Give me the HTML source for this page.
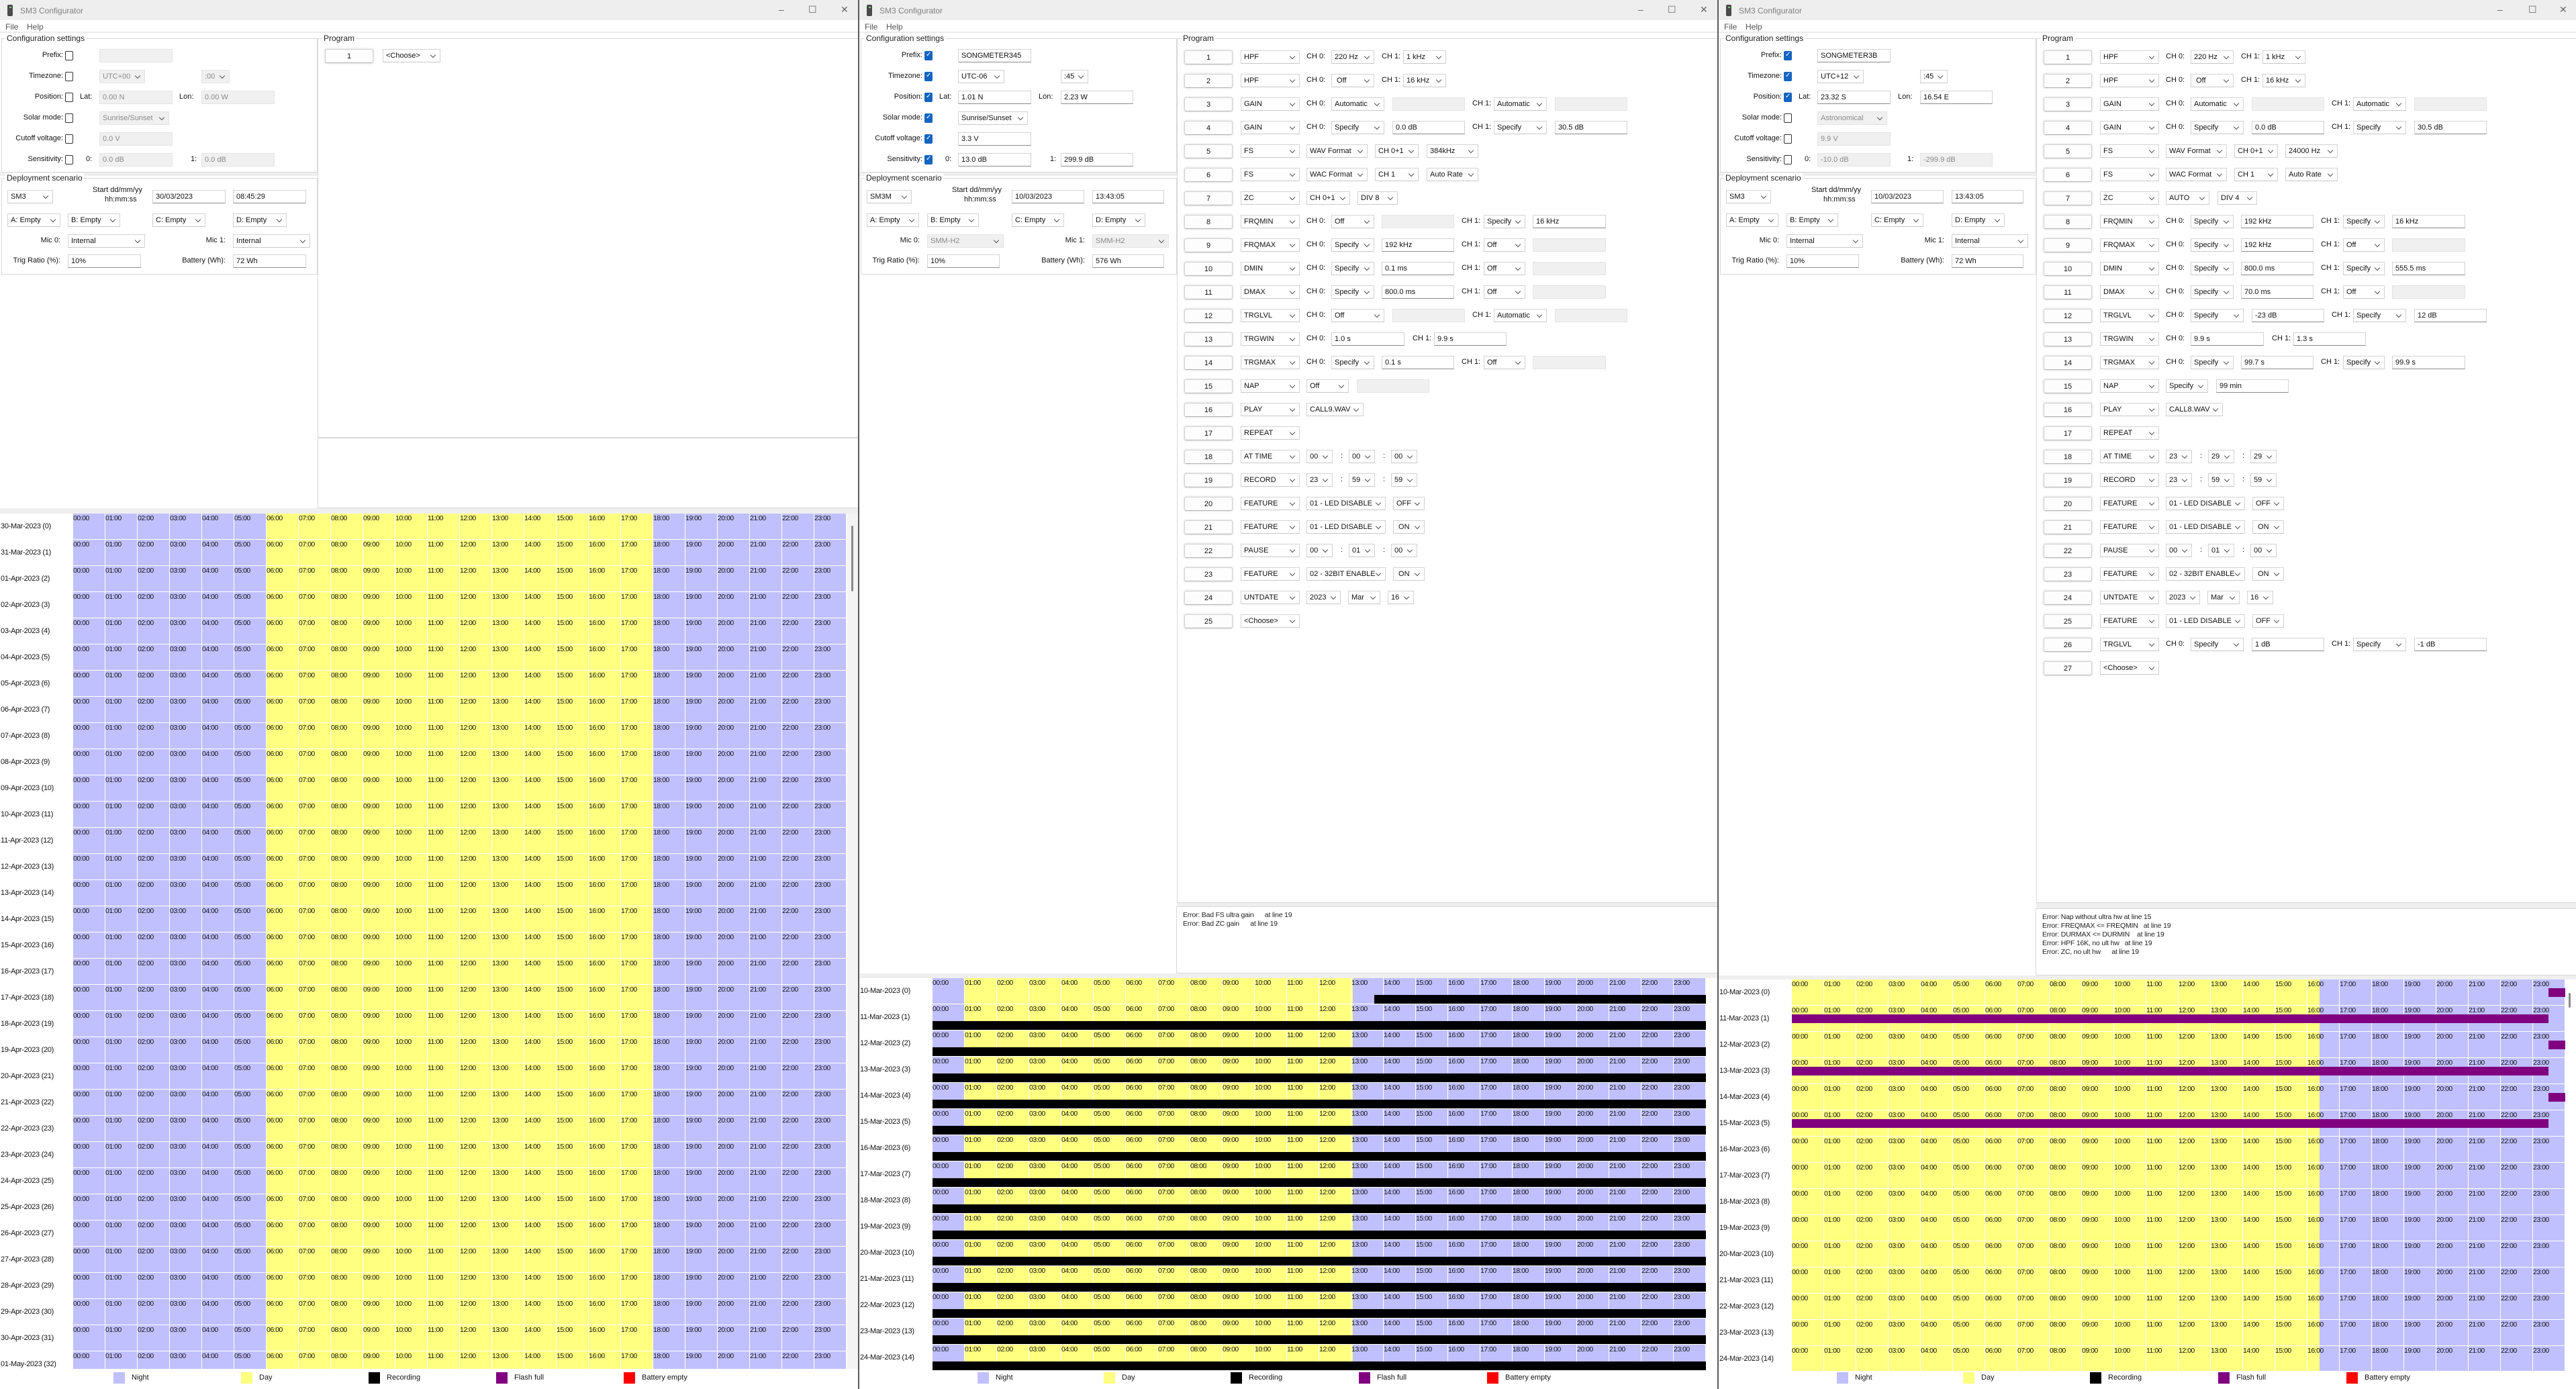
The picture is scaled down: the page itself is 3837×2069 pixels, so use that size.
<!DOCTYPE html>
<html><head><meta charset="utf-8">
<style>
*{box-sizing:border-box}
body{margin:0;width:3837px;height:2069px;position:relative;overflow:hidden;font-family:"Liberation Sans",sans-serif;font-size:11px;color:#111;background:#fff}
.w{position:absolute;top:0;width:1278px;height:2069px;overflow:hidden;background:#fff}
.dv{position:absolute;top:0;width:2px;height:2069px;background:#5a5a5a}
.tb{position:absolute;left:0;top:0;width:100%;height:30px;background:#eeeeee}
.tb .ic{position:absolute;left:11px;top:7px;width:8px;height:17px;background:#4a4a4a;border-radius:2px}
.tb .ic:after{content:"";position:absolute;left:3px;top:3px;width:3px;height:2px;background:#7c7}
.tb .tt{position:absolute;left:30px;top:9px;color:#808080;font-size:12px}
.tb .cl{position:absolute;top:6px;color:#666;font-size:14px}
.mn{position:absolute;left:0;top:30px;width:100%;height:19px;background:#fff;border-bottom:2px solid #ececec}
.mn span{position:absolute;top:3px;color:#555;font-size:12px}
.gb{position:absolute;border:1px solid #d9d9d9}
.gt{position:absolute;background:#fff;padding:0 2px;font-size:12px;color:#222}
.gs{position:absolute;background:#efefef}
.x{position:absolute;top:0;height:20px;line-height:18px;border:1px solid #d3d3d3;border-bottom:1px solid #8c8c8c;background:#fff;padding-left:4px;white-space:nowrap;overflow:hidden;font-size:11px;font-style:normal}
.s{border-bottom-color:#c8c8c8}
.s:after{content:"";position:absolute;right:7px;top:5px;width:5px;height:5px;border-right:1px solid #555;border-bottom:1px solid #555;transform:rotate(45deg)}
.d{background:#f0f0f0;color:#8a8a8a;border-color:#e4e4e4}
.nb{position:absolute;left:484px;top:0;width:72px;height:21px;line-height:20px;text-align:center;border:1px solid #cfcfcf;border-bottom-color:#b0b0b0;border-radius:3px;background:#fdfdfd;font-weight:normal;font-size:11px;box-shadow:0 0 0 2px #f2f2f2}
u{position:absolute;top:3px;text-decoration:none;white-space:nowrap}
.rl{left:0;width:94px;text-align:right}
.cb{position:absolute;left:97px;top:3px;width:12px;height:14px;border:1px solid #333;border-radius:2px;background:#fff}
.cb.on{background:#1565c0;border-color:#1565c0}
.cb.on:after{content:"✓";position:absolute;left:1px;top:-1px;color:#fff;font-size:10px}
.pr,.cr{position:absolute;left:0;width:1278px;height:22px}
.ty{left:568px;width:88px}
.a{left:666px}.c0{left:703px;width:64px}.c0w{left:703px;width:79px}
.f0{left:778px;width:108px}.f0w{left:794px;width:108px}
.la1{left:778px}.lb1{left:897px}.lc1{left:913px}
.c1{left:810px;width:64px}.c1b{left:930px;width:62px}.c1w{left:945px;width:79px}
.f1b{left:1003px;width:109px}.f1w{left:1036px;width:108px}
.t1{left:666px;width:39px}.t2{left:729px;width:39px}.t3{left:792px;width:39px}
.k1{left:717px}.k2{left:780px}
.fe{left:666px;width:118px}.fo{left:795px;width:47px}
.er{position:absolute;font-size:10.5px;letter-spacing:-0.2px;white-space:pre;color:#222}
.g{position:absolute;left:0;width:1278px;overflow:hidden;background:#fff}
.r{position:absolute;left:0;width:1278px;height:39px}
.dl{position:absolute;left:1px;top:13px;font-size:11px;letter-spacing:-0.3px;white-space:nowrap}
.h{position:absolute;left:109px;top:0;width:1152px;height:38px;white-space:nowrap;font-size:0}
.h i{display:inline-block;width:48px;height:38px;border-right:1px solid #fff;font-style:normal;font-size:10.5px;letter-spacing:-0.5px;vertical-align:top;padding-top:1px;position:relative;z-index:1}
.n1{background:linear-gradient(90deg,#c0c0ff 288px,#ffff80 288px,#ffff80 864px,#c0c0ff 864px)}
.n2{background:linear-gradient(90deg,#c0c0ff 48px,#ffff80 48px,#ffff80 626px,#c0c0ff 626px)}
.n3{background:linear-gradient(90deg,#ffff80 786px,#c0c0ff 786px)}
.bk{position:absolute;top:25px;height:13px;background:#000;z-index:2}
.fl{position:absolute;top:13px;height:13px;background:#800080;z-index:2}
.lg{position:absolute;top:2044px;width:17px;height:17px}
.lt{position:absolute;top:2046px;font-size:11px}
</style></head><body>

<!-- ================= WINDOW 1 ================= -->
<div class="w" style="left:0">
<div class="tb"><div class="ic"></div><div class="tt">SM3 Configurator</div><span class="cl" style="left:1160px">–</span><span class="cl" style="left:1204px">☐</span><span class="cl" style="left:1252px">✕</span></div>
<div class="mn"><span style="left:8px">File</span><span style="left:40px">Help</span></div>
<div class="gb" style="left:2px;top:57px;width:471px;height:200px"></div><div class="gt" style="left:8px;top:50px">Configuration settings</div>
<div class="gs" style="left:0;top:257px;width:473px;height:5px"></div>
<div class="gb" style="left:2px;top:265px;width:471px;height:144px"></div><div class="gt" style="left:8px;top:258px">Deployment scenario</div>
<div class="gb" style="left:473px;top:57px;width:810px;height:595px"></div><div class="gt" style="left:480px;top:50px">Program</div>
<div class="gb" style="left:473px;top:652px;width:810px;height:105px"></div>
<div class="gs" style="left:0;top:757px;width:1278px;height:8px"></div>

<div class="cr" style="top:73px"><u class="rl">Prefix:</u><span class="cb"></span><i class="x d" style="left:148px;width:109px"></i></div>
<div class="cr" style="top:104px"><u class="rl">Timezone:</u><span class="cb"></span><i class="x s d" style="left:148px;width:68px">UTC+00</i><i class="x s d" style="left:300px;width:42px">:00</i></div>
<div class="cr" style="top:135px"><u class="rl">Position:</u><span class="cb"></span><u style="left:119px">Lat:</u><i class="x d" style="left:148px;width:109px">0.00 N</i><u style="left:267px">Lon:</u><i class="x d" style="left:300px;width:109px">0.00 W</i></div>
<div class="cr" style="top:166px"><u class="rl">Solar mode:</u><span class="cb"></span><i class="x s d" style="left:148px;width:104px">Sunrise/Sunset</i></div>
<div class="cr" style="top:197px"><u class="rl">Cutoff voltage:</u><span class="cb"></span><i class="x d" style="left:148px;width:109px">0.0 V</i></div>
<div class="cr" style="top:228px"><u class="rl">Sensitivity:</u><span class="cb"></span><u style="left:128px">0:</u><i class="x d" style="left:148px;width:109px">0.0 dB</i><u style="left:284px">1:</u><i class="x d" style="left:300px;width:109px">0.0 dB</i></div>

<div class="cr" style="top:283px"><i class="x s" style="left:11px;width:68px">SM3</i><u style="left:138px;top:-6px">Start dd/mm/yy</u><u style="left:156px;top:8px">hh:mm:ss</u><i class="x" style="left:227px;width:109px">30/03/2023</i><i class="x" style="left:347px;width:109px">08:45:29</i></div>
<div class="cr" style="top:318px"><i class="x s" style="left:11px;width:79px">A: Empty</i><i class="x s" style="left:101px;width:78px">B: Empty</i><i class="x s" style="left:227px;width:79px">C: Empty</i><i class="x s" style="left:347px;width:80px">D: Empty</i></div>
<div class="cr" style="top:349px"><u style="left:40px;width:50px;text-align:right">Mic 0:</u><i class="x s" style="left:101px;width:115px">Internal</i><u style="left:286px;width:50px;text-align:right">Mic 1:</u><i class="x s" style="left:347px;width:115px">Internal</i></div>
<div class="cr" style="top:379px"><u style="left:0;width:90px;text-align:right">Trig Ratio (%):</u><i class="x" style="left:101px;width:109px">10%</i><u style="left:236px;width:100px;text-align:right">Battery (Wh):</u><i class="x" style="left:347px;width:109px">72 Wh</i></div>

<div class="pr" style="top:73px"><b class="nb">1</b><i class="x s" style="left:570px;width:86px">&lt;Choose&gt;</i></div>

<div class="g" style="top:765px;height:1274px">
<div class="r" style="top:0"><span class="dl">30-Mar-2023 (0)</span><div class="h n1"><i>00:00</i><i>01:00</i><i>02:00</i><i>03:00</i><i>04:00</i><i>05:00</i><i>06:00</i><i>07:00</i><i>08:00</i><i>09:00</i><i>10:00</i><i>11:00</i><i>12:00</i><i>13:00</i><i>14:00</i><i>15:00</i><i>16:00</i><i>17:00</i><i>18:00</i><i>19:00</i><i>20:00</i><i>21:00</i><i>22:00</i><i>23:00</i></div></div>
<div class="r" style="top:39px"><span class="dl">31-Mar-2023 (1)</span><div class="h n1"><i>00:00</i><i>01:00</i><i>02:00</i><i>03:00</i><i>04:00</i><i>05:00</i><i>06:00</i><i>07:00</i><i>08:00</i><i>09:00</i><i>10:00</i><i>11:00</i><i>12:00</i><i>13:00</i><i>14:00</i><i>15:00</i><i>16:00</i><i>17:00</i><i>18:00</i><i>19:00</i><i>20:00</i><i>21:00</i><i>22:00</i><i>23:00</i></div></div>
<div class="r" style="top:78px"><span class="dl">01-Apr-2023 (2)</span><div class="h n1"><i>00:00</i><i>01:00</i><i>02:00</i><i>03:00</i><i>04:00</i><i>05:00</i><i>06:00</i><i>07:00</i><i>08:00</i><i>09:00</i><i>10:00</i><i>11:00</i><i>12:00</i><i>13:00</i><i>14:00</i><i>15:00</i><i>16:00</i><i>17:00</i><i>18:00</i><i>19:00</i><i>20:00</i><i>21:00</i><i>22:00</i><i>23:00</i></div></div>
<div class="r" style="top:117px"><span class="dl">02-Apr-2023 (3)</span><div class="h n1"><i>00:00</i><i>01:00</i><i>02:00</i><i>03:00</i><i>04:00</i><i>05:00</i><i>06:00</i><i>07:00</i><i>08:00</i><i>09:00</i><i>10:00</i><i>11:00</i><i>12:00</i><i>13:00</i><i>14:00</i><i>15:00</i><i>16:00</i><i>17:00</i><i>18:00</i><i>19:00</i><i>20:00</i><i>21:00</i><i>22:00</i><i>23:00</i></div></div>
<div class="r" style="top:156px"><span class="dl">03-Apr-2023 (4)</span><div class="h n1"><i>00:00</i><i>01:00</i><i>02:00</i><i>03:00</i><i>04:00</i><i>05:00</i><i>06:00</i><i>07:00</i><i>08:00</i><i>09:00</i><i>10:00</i><i>11:00</i><i>12:00</i><i>13:00</i><i>14:00</i><i>15:00</i><i>16:00</i><i>17:00</i><i>18:00</i><i>19:00</i><i>20:00</i><i>21:00</i><i>22:00</i><i>23:00</i></div></div>
<div class="r" style="top:195px"><span class="dl">04-Apr-2023 (5)</span><div class="h n1"><i>00:00</i><i>01:00</i><i>02:00</i><i>03:00</i><i>04:00</i><i>05:00</i><i>06:00</i><i>07:00</i><i>08:00</i><i>09:00</i><i>10:00</i><i>11:00</i><i>12:00</i><i>13:00</i><i>14:00</i><i>15:00</i><i>16:00</i><i>17:00</i><i>18:00</i><i>19:00</i><i>20:00</i><i>21:00</i><i>22:00</i><i>23:00</i></div></div>
<div class="r" style="top:234px"><span class="dl">05-Apr-2023 (6)</span><div class="h n1"><i>00:00</i><i>01:00</i><i>02:00</i><i>03:00</i><i>04:00</i><i>05:00</i><i>06:00</i><i>07:00</i><i>08:00</i><i>09:00</i><i>10:00</i><i>11:00</i><i>12:00</i><i>13:00</i><i>14:00</i><i>15:00</i><i>16:00</i><i>17:00</i><i>18:00</i><i>19:00</i><i>20:00</i><i>21:00</i><i>22:00</i><i>23:00</i></div></div>
<div class="r" style="top:273px"><span class="dl">06-Apr-2023 (7)</span><div class="h n1"><i>00:00</i><i>01:00</i><i>02:00</i><i>03:00</i><i>04:00</i><i>05:00</i><i>06:00</i><i>07:00</i><i>08:00</i><i>09:00</i><i>10:00</i><i>11:00</i><i>12:00</i><i>13:00</i><i>14:00</i><i>15:00</i><i>16:00</i><i>17:00</i><i>18:00</i><i>19:00</i><i>20:00</i><i>21:00</i><i>22:00</i><i>23:00</i></div></div>
<div class="r" style="top:312px"><span class="dl">07-Apr-2023 (8)</span><div class="h n1"><i>00:00</i><i>01:00</i><i>02:00</i><i>03:00</i><i>04:00</i><i>05:00</i><i>06:00</i><i>07:00</i><i>08:00</i><i>09:00</i><i>10:00</i><i>11:00</i><i>12:00</i><i>13:00</i><i>14:00</i><i>15:00</i><i>16:00</i><i>17:00</i><i>18:00</i><i>19:00</i><i>20:00</i><i>21:00</i><i>22:00</i><i>23:00</i></div></div>
<div class="r" style="top:351px"><span class="dl">08-Apr-2023 (9)</span><div class="h n1"><i>00:00</i><i>01:00</i><i>02:00</i><i>03:00</i><i>04:00</i><i>05:00</i><i>06:00</i><i>07:00</i><i>08:00</i><i>09:00</i><i>10:00</i><i>11:00</i><i>12:00</i><i>13:00</i><i>14:00</i><i>15:00</i><i>16:00</i><i>17:00</i><i>18:00</i><i>19:00</i><i>20:00</i><i>21:00</i><i>22:00</i><i>23:00</i></div></div>
<div class="r" style="top:390px"><span class="dl">09-Apr-2023 (10)</span><div class="h n1"><i>00:00</i><i>01:00</i><i>02:00</i><i>03:00</i><i>04:00</i><i>05:00</i><i>06:00</i><i>07:00</i><i>08:00</i><i>09:00</i><i>10:00</i><i>11:00</i><i>12:00</i><i>13:00</i><i>14:00</i><i>15:00</i><i>16:00</i><i>17:00</i><i>18:00</i><i>19:00</i><i>20:00</i><i>21:00</i><i>22:00</i><i>23:00</i></div></div>
<div class="r" style="top:429px"><span class="dl">10-Apr-2023 (11)</span><div class="h n1"><i>00:00</i><i>01:00</i><i>02:00</i><i>03:00</i><i>04:00</i><i>05:00</i><i>06:00</i><i>07:00</i><i>08:00</i><i>09:00</i><i>10:00</i><i>11:00</i><i>12:00</i><i>13:00</i><i>14:00</i><i>15:00</i><i>16:00</i><i>17:00</i><i>18:00</i><i>19:00</i><i>20:00</i><i>21:00</i><i>22:00</i><i>23:00</i></div></div>
<div class="r" style="top:468px"><span class="dl">11-Apr-2023 (12)</span><div class="h n1"><i>00:00</i><i>01:00</i><i>02:00</i><i>03:00</i><i>04:00</i><i>05:00</i><i>06:00</i><i>07:00</i><i>08:00</i><i>09:00</i><i>10:00</i><i>11:00</i><i>12:00</i><i>13:00</i><i>14:00</i><i>15:00</i><i>16:00</i><i>17:00</i><i>18:00</i><i>19:00</i><i>20:00</i><i>21:00</i><i>22:00</i><i>23:00</i></div></div>
<div class="r" style="top:507px"><span class="dl">12-Apr-2023 (13)</span><div class="h n1"><i>00:00</i><i>01:00</i><i>02:00</i><i>03:00</i><i>04:00</i><i>05:00</i><i>06:00</i><i>07:00</i><i>08:00</i><i>09:00</i><i>10:00</i><i>11:00</i><i>12:00</i><i>13:00</i><i>14:00</i><i>15:00</i><i>16:00</i><i>17:00</i><i>18:00</i><i>19:00</i><i>20:00</i><i>21:00</i><i>22:00</i><i>23:00</i></div></div>
<div class="r" style="top:546px"><span class="dl">13-Apr-2023 (14)</span><div class="h n1"><i>00:00</i><i>01:00</i><i>02:00</i><i>03:00</i><i>04:00</i><i>05:00</i><i>06:00</i><i>07:00</i><i>08:00</i><i>09:00</i><i>10:00</i><i>11:00</i><i>12:00</i><i>13:00</i><i>14:00</i><i>15:00</i><i>16:00</i><i>17:00</i><i>18:00</i><i>19:00</i><i>20:00</i><i>21:00</i><i>22:00</i><i>23:00</i></div></div>
<div class="r" style="top:585px"><span class="dl">14-Apr-2023 (15)</span><div class="h n1"><i>00:00</i><i>01:00</i><i>02:00</i><i>03:00</i><i>04:00</i><i>05:00</i><i>06:00</i><i>07:00</i><i>08:00</i><i>09:00</i><i>10:00</i><i>11:00</i><i>12:00</i><i>13:00</i><i>14:00</i><i>15:00</i><i>16:00</i><i>17:00</i><i>18:00</i><i>19:00</i><i>20:00</i><i>21:00</i><i>22:00</i><i>23:00</i></div></div>
<div class="r" style="top:624px"><span class="dl">15-Apr-2023 (16)</span><div class="h n1"><i>00:00</i><i>01:00</i><i>02:00</i><i>03:00</i><i>04:00</i><i>05:00</i><i>06:00</i><i>07:00</i><i>08:00</i><i>09:00</i><i>10:00</i><i>11:00</i><i>12:00</i><i>13:00</i><i>14:00</i><i>15:00</i><i>16:00</i><i>17:00</i><i>18:00</i><i>19:00</i><i>20:00</i><i>21:00</i><i>22:00</i><i>23:00</i></div></div>
<div class="r" style="top:663px"><span class="dl">16-Apr-2023 (17)</span><div class="h n1"><i>00:00</i><i>01:00</i><i>02:00</i><i>03:00</i><i>04:00</i><i>05:00</i><i>06:00</i><i>07:00</i><i>08:00</i><i>09:00</i><i>10:00</i><i>11:00</i><i>12:00</i><i>13:00</i><i>14:00</i><i>15:00</i><i>16:00</i><i>17:00</i><i>18:00</i><i>19:00</i><i>20:00</i><i>21:00</i><i>22:00</i><i>23:00</i></div></div>
<div class="r" style="top:702px"><span class="dl">17-Apr-2023 (18)</span><div class="h n1"><i>00:00</i><i>01:00</i><i>02:00</i><i>03:00</i><i>04:00</i><i>05:00</i><i>06:00</i><i>07:00</i><i>08:00</i><i>09:00</i><i>10:00</i><i>11:00</i><i>12:00</i><i>13:00</i><i>14:00</i><i>15:00</i><i>16:00</i><i>17:00</i><i>18:00</i><i>19:00</i><i>20:00</i><i>21:00</i><i>22:00</i><i>23:00</i></div></div>
<div class="r" style="top:741px"><span class="dl">18-Apr-2023 (19)</span><div class="h n1"><i>00:00</i><i>01:00</i><i>02:00</i><i>03:00</i><i>04:00</i><i>05:00</i><i>06:00</i><i>07:00</i><i>08:00</i><i>09:00</i><i>10:00</i><i>11:00</i><i>12:00</i><i>13:00</i><i>14:00</i><i>15:00</i><i>16:00</i><i>17:00</i><i>18:00</i><i>19:00</i><i>20:00</i><i>21:00</i><i>22:00</i><i>23:00</i></div></div>
<div class="r" style="top:780px"><span class="dl">19-Apr-2023 (20)</span><div class="h n1"><i>00:00</i><i>01:00</i><i>02:00</i><i>03:00</i><i>04:00</i><i>05:00</i><i>06:00</i><i>07:00</i><i>08:00</i><i>09:00</i><i>10:00</i><i>11:00</i><i>12:00</i><i>13:00</i><i>14:00</i><i>15:00</i><i>16:00</i><i>17:00</i><i>18:00</i><i>19:00</i><i>20:00</i><i>21:00</i><i>22:00</i><i>23:00</i></div></div>
<div class="r" style="top:819px"><span class="dl">20-Apr-2023 (21)</span><div class="h n1"><i>00:00</i><i>01:00</i><i>02:00</i><i>03:00</i><i>04:00</i><i>05:00</i><i>06:00</i><i>07:00</i><i>08:00</i><i>09:00</i><i>10:00</i><i>11:00</i><i>12:00</i><i>13:00</i><i>14:00</i><i>15:00</i><i>16:00</i><i>17:00</i><i>18:00</i><i>19:00</i><i>20:00</i><i>21:00</i><i>22:00</i><i>23:00</i></div></div>
<div class="r" style="top:858px"><span class="dl">21-Apr-2023 (22)</span><div class="h n1"><i>00:00</i><i>01:00</i><i>02:00</i><i>03:00</i><i>04:00</i><i>05:00</i><i>06:00</i><i>07:00</i><i>08:00</i><i>09:00</i><i>10:00</i><i>11:00</i><i>12:00</i><i>13:00</i><i>14:00</i><i>15:00</i><i>16:00</i><i>17:00</i><i>18:00</i><i>19:00</i><i>20:00</i><i>21:00</i><i>22:00</i><i>23:00</i></div></div>
<div class="r" style="top:897px"><span class="dl">22-Apr-2023 (23)</span><div class="h n1"><i>00:00</i><i>01:00</i><i>02:00</i><i>03:00</i><i>04:00</i><i>05:00</i><i>06:00</i><i>07:00</i><i>08:00</i><i>09:00</i><i>10:00</i><i>11:00</i><i>12:00</i><i>13:00</i><i>14:00</i><i>15:00</i><i>16:00</i><i>17:00</i><i>18:00</i><i>19:00</i><i>20:00</i><i>21:00</i><i>22:00</i><i>23:00</i></div></div>
<div class="r" style="top:936px"><span class="dl">23-Apr-2023 (24)</span><div class="h n1"><i>00:00</i><i>01:00</i><i>02:00</i><i>03:00</i><i>04:00</i><i>05:00</i><i>06:00</i><i>07:00</i><i>08:00</i><i>09:00</i><i>10:00</i><i>11:00</i><i>12:00</i><i>13:00</i><i>14:00</i><i>15:00</i><i>16:00</i><i>17:00</i><i>18:00</i><i>19:00</i><i>20:00</i><i>21:00</i><i>22:00</i><i>23:00</i></div></div>
<div class="r" style="top:975px"><span class="dl">24-Apr-2023 (25)</span><div class="h n1"><i>00:00</i><i>01:00</i><i>02:00</i><i>03:00</i><i>04:00</i><i>05:00</i><i>06:00</i><i>07:00</i><i>08:00</i><i>09:00</i><i>10:00</i><i>11:00</i><i>12:00</i><i>13:00</i><i>14:00</i><i>15:00</i><i>16:00</i><i>17:00</i><i>18:00</i><i>19:00</i><i>20:00</i><i>21:00</i><i>22:00</i><i>23:00</i></div></div>
<div class="r" style="top:1014px"><span class="dl">25-Apr-2023 (26)</span><div class="h n1"><i>00:00</i><i>01:00</i><i>02:00</i><i>03:00</i><i>04:00</i><i>05:00</i><i>06:00</i><i>07:00</i><i>08:00</i><i>09:00</i><i>10:00</i><i>11:00</i><i>12:00</i><i>13:00</i><i>14:00</i><i>15:00</i><i>16:00</i><i>17:00</i><i>18:00</i><i>19:00</i><i>20:00</i><i>21:00</i><i>22:00</i><i>23:00</i></div></div>
<div class="r" style="top:1053px"><span class="dl">26-Apr-2023 (27)</span><div class="h n1"><i>00:00</i><i>01:00</i><i>02:00</i><i>03:00</i><i>04:00</i><i>05:00</i><i>06:00</i><i>07:00</i><i>08:00</i><i>09:00</i><i>10:00</i><i>11:00</i><i>12:00</i><i>13:00</i><i>14:00</i><i>15:00</i><i>16:00</i><i>17:00</i><i>18:00</i><i>19:00</i><i>20:00</i><i>21:00</i><i>22:00</i><i>23:00</i></div></div>
<div class="r" style="top:1092px"><span class="dl">27-Apr-2023 (28)</span><div class="h n1"><i>00:00</i><i>01:00</i><i>02:00</i><i>03:00</i><i>04:00</i><i>05:00</i><i>06:00</i><i>07:00</i><i>08:00</i><i>09:00</i><i>10:00</i><i>11:00</i><i>12:00</i><i>13:00</i><i>14:00</i><i>15:00</i><i>16:00</i><i>17:00</i><i>18:00</i><i>19:00</i><i>20:00</i><i>21:00</i><i>22:00</i><i>23:00</i></div></div>
<div class="r" style="top:1131px"><span class="dl">28-Apr-2023 (29)</span><div class="h n1"><i>00:00</i><i>01:00</i><i>02:00</i><i>03:00</i><i>04:00</i><i>05:00</i><i>06:00</i><i>07:00</i><i>08:00</i><i>09:00</i><i>10:00</i><i>11:00</i><i>12:00</i><i>13:00</i><i>14:00</i><i>15:00</i><i>16:00</i><i>17:00</i><i>18:00</i><i>19:00</i><i>20:00</i><i>21:00</i><i>22:00</i><i>23:00</i></div></div>
<div class="r" style="top:1170px"><span class="dl">29-Apr-2023 (30)</span><div class="h n1"><i>00:00</i><i>01:00</i><i>02:00</i><i>03:00</i><i>04:00</i><i>05:00</i><i>06:00</i><i>07:00</i><i>08:00</i><i>09:00</i><i>10:00</i><i>11:00</i><i>12:00</i><i>13:00</i><i>14:00</i><i>15:00</i><i>16:00</i><i>17:00</i><i>18:00</i><i>19:00</i><i>20:00</i><i>21:00</i><i>22:00</i><i>23:00</i></div></div>
<div class="r" style="top:1209px"><span class="dl">30-Apr-2023 (31)</span><div class="h n1"><i>00:00</i><i>01:00</i><i>02:00</i><i>03:00</i><i>04:00</i><i>05:00</i><i>06:00</i><i>07:00</i><i>08:00</i><i>09:00</i><i>10:00</i><i>11:00</i><i>12:00</i><i>13:00</i><i>14:00</i><i>15:00</i><i>16:00</i><i>17:00</i><i>18:00</i><i>19:00</i><i>20:00</i><i>21:00</i><i>22:00</i><i>23:00</i></div></div>
<div class="r" style="top:1248px"><span class="dl">01-May-2023 (32)</span><div class="h n1"><i>00:00</i><i>01:00</i><i>02:00</i><i>03:00</i><i>04:00</i><i>05:00</i><i>06:00</i><i>07:00</i><i>08:00</i><i>09:00</i><i>10:00</i><i>11:00</i><i>12:00</i><i>13:00</i><i>14:00</i><i>15:00</i><i>16:00</i><i>17:00</i><i>18:00</i><i>19:00</i><i>20:00</i><i>21:00</i><i>22:00</i><i>23:00</i></div></div>
<div style="position:absolute;left:1262px;top:0;width:16px;height:1274px;background:#f4f4f4"></div>
<div style="position:absolute;left:1268px;top:18px;width:3px;height:98px;background:#8a8a8a;border-radius:2px"></div>
</div>
<div class="lg" style="left:169px;background:#c0c0ff"></div><div class="lt" style="left:196px">Night</div>
<div class="lg" style="left:359px;background:#ffff80"></div><div class="lt" style="left:386px">Day</div>
<div class="lg" style="left:549px;background:#000"></div><div class="lt" style="left:576px">Recording</div>
<div class="lg" style="left:739px;background:#800080"></div><div class="lt" style="left:766px">Flash full</div>
<div class="lg" style="left:929px;background:#f00"></div><div class="lt" style="left:956px">Battery empty</div>
</div>
<div class="dv" style="left:1278px"></div>

<!-- ================= WINDOW 2 ================= -->
<div class="w" style="left:1280px">
<div class="tb"><div class="ic"></div><div class="tt">SM3 Configurator</div><span class="cl" style="left:1160px">–</span><span class="cl" style="left:1204px">☐</span><span class="cl" style="left:1252px">✕</span></div>
<div class="mn"><span style="left:8px">File</span><span style="left:40px">Help</span></div>
<div class="gb" style="left:2px;top:57px;width:471px;height:200px"></div><div class="gt" style="left:8px;top:50px">Configuration settings</div>
<div class="gs" style="left:0;top:257px;width:473px;height:5px"></div>
<div class="gb" style="left:2px;top:265px;width:471px;height:144px"></div><div class="gt" style="left:8px;top:258px">Deployment scenario</div>
<div class="gb" style="left:473px;top:57px;width:810px;height:1288px"></div><div class="gt" style="left:480px;top:50px">Program</div>
<div class="gs" style="left:473px;top:1345px;width:805px;height:5px"></div>
<div class="gb" style="left:472px;top:1350px;width:810px;height:100px"></div>
<div class="gs" style="left:0;top:1450px;width:1278px;height:7px"></div>
<div class="er" style="left:482px;top:1357px">Error: Bad FS ultra gain      at line 19</div>
<div class="er" style="left:482px;top:1370px">Error: Bad ZC gain      at line 19</div>

<div class="cr" style="top:73px"><u class="rl">Prefix:</u><span class="cb on"></span><i class="x" style="left:147px;width:109px">SONGMETER345</i></div>
<div class="cr" style="top:104px"><u class="rl">Timezone:</u><span class="cb on"></span><i class="x s" style="left:147px;width:69px">UTC-06</i><i class="x s" style="left:300px;width:41px">:45</i></div>
<div class="cr" style="top:135px"><u class="rl">Position:</u><span class="cb on"></span><u style="left:119px">Lat:</u><i class="x" style="left:147px;width:109px">1.01 N</i><u style="left:267px">Lon:</u><i class="x" style="left:300px;width:108px">2.23 W</i></div>
<div class="cr" style="top:166px"><u class="rl">Solar mode:</u><span class="cb on"></span><i class="x s" style="left:147px;width:104px">Sunrise/Sunset</i></div>
<div class="cr" style="top:197px"><u class="rl">Cutoff voltage:</u><span class="cb on"></span><i class="x" style="left:147px;width:109px">3.3 V</i></div>
<div class="cr" style="top:228px"><u class="rl">Sensitivity:</u><span class="cb on"></span><u style="left:128px">0:</u><i class="x" style="left:147px;width:109px">13.0 dB</i><u style="left:284px">1:</u><i class="x" style="left:300px;width:108px">299.9 dB</i></div>

<div class="cr" style="top:283px"><i class="x s" style="left:11px;width:67px">SM3M</i><u style="left:138px;top:-6px">Start dd/mm/yy</u><u style="left:156px;top:8px">hh:mm:ss</u><i class="x" style="left:227px;width:108px">10/03/2023</i><i class="x" style="left:347px;width:107px">13:43:05</i></div>
<div class="cr" style="top:318px"><i class="x s" style="left:11px;width:78px">A: Empty</i><i class="x s" style="left:101px;width:77px">B: Empty</i><i class="x s" style="left:227px;width:78px">C: Empty</i><i class="x s" style="left:347px;width:79px">D: Empty</i></div>
<div class="cr" style="top:349px"><u style="left:40px;width:50px;text-align:right">Mic 0:</u><i class="x s d" style="left:101px;width:114px">SMM-H2</i><u style="left:286px;width:50px;text-align:right">Mic 1:</u><i class="x s d" style="left:347px;width:114px">SMM-H2</i></div>
<div class="cr" style="top:379px"><u style="left:0;width:90px;text-align:right">Trig Ratio (%):</u><i class="x" style="left:101px;width:108px">10%</i><u style="left:236px;width:100px;text-align:right">Battery (Wh):</u><i class="x" style="left:347px;width:107px">576 Wh</i></div>

<div class="pr" style="top:75px"><b class="nb">1</b><i class="x s ty">HPF</i><u class="a">CH 0:</u><i class="x s c0">220 Hz</i><u class="la1">CH 1:</u><i class="x s c1">1 kHz</i></div>
<div class="pr" style="top:110px"><b class="nb">2</b><i class="x s ty">HPF</i><u class="a">CH 0:</u><i class="x s c0">&nbsp;Off</i><u class="la1">CH 1:</u><i class="x s c1">16 kHz</i></div>
<div class="pr" style="top:145px"><b class="nb">3</b><i class="x s ty">GAIN</i><u class="a">CH 0:</u><i class="x s c0w">Automatic</i><i class="x d f0w"></i><u class="lc1">CH 1:</u><i class="x s c1w">Automatic</i><i class="x d f1w"></i></div>
<div class="pr" style="top:180px"><b class="nb">4</b><i class="x s ty">GAIN</i><u class="a">CH 0:</u><i class="x s c0w">Specify</i><i class="x f0w">0.0 dB</i><u class="lc1">CH 1:</u><i class="x s c1w">Specify</i><i class="x f1w">30.5 dB</i></div>
<div class="pr" style="top:215px"><b class="nb">5</b><i class="x s ty">FS</i><i class="x s" style="left:666px;width:91px">WAV Format</i><i class="x s" style="left:768px;width:65px">CH 0+1</i><i class="x s" style="left:845px;width:77px">384kHz</i></div>
<div class="pr" style="top:250px"><b class="nb">6</b><i class="x s ty">FS</i><i class="x s" style="left:666px;width:91px">WAC Format</i><i class="x s" style="left:768px;width:65px">CH 1</i><i class="x s" style="left:845px;width:77px">Auto Rate</i></div>
<div class="pr" style="top:285px"><b class="nb">7</b><i class="x s ty">ZC</i><i class="x s" style="left:666px;width:65px">CH 0+1</i><i class="x s" style="left:742px;width:60px">DIV 8</i></div>
<div class="pr" style="top:320px"><b class="nb">8</b><i class="x s ty">FRQMIN</i><u class="a">CH 0:</u><i class="x s c0">Off</i><i class="x d f0"></i><u class="lb1">CH 1:</u><i class="x s c1b">Specify</i><i class="x f1b">16 kHz</i></div>
<div class="pr" style="top:355px"><b class="nb">9</b><i class="x s ty">FRQMAX</i><u class="a">CH 0:</u><i class="x s c0">Specify</i><i class="x f0">192 kHz</i><u class="lb1">CH 1:</u><i class="x s c1b">Off</i><i class="x d f1b"></i></div>
<div class="pr" style="top:390px"><b class="nb">10</b><i class="x s ty">DMIN</i><u class="a">CH 0:</u><i class="x s c0">Specify</i><i class="x f0">0.1 ms</i><u class="lb1">CH 1:</u><i class="x s c1b">Off</i><i class="x d f1b"></i></div>
<div class="pr" style="top:425px"><b class="nb">11</b><i class="x s ty">DMAX</i><u class="a">CH 0:</u><i class="x s c0">Specify</i><i class="x f0">800.0 ms</i><u class="lb1">CH 1:</u><i class="x s c1b">Off</i><i class="x d f1b"></i></div>
<div class="pr" style="top:460px"><b class="nb">12</b><i class="x s ty">TRGLVL</i><u class="a">CH 0:</u><i class="x s c0w">Off</i><i class="x d f0w"></i><u class="lc1">CH 1:</u><i class="x s c1w">Automatic</i><i class="x d f1w"></i></div>
<div class="pr" style="top:495px"><b class="nb">13</b><i class="x s ty">TRGWIN</i><u class="a">CH 0:</u><i class="x" style="left:703px;width:109px">1.0 s</i><u style="left:824px">CH 1:</u><i class="x" style="left:856px;width:108px">9.9 s</i></div>
<div class="pr" style="top:530px"><b class="nb">14</b><i class="x s ty">TRGMAX</i><u class="a">CH 0:</u><i class="x s c0">Specify</i><i class="x f0">0.1 s</i><u class="lb1">CH 1:</u><i class="x s c1b">Off</i><i class="x d f1b"></i></div>
<div class="pr" style="top:565px"><b class="nb">15</b><i class="x s ty">NAP</i><i class="x s" style="left:666px;width:63px">Off</i><i class="x d" style="left:741px;width:108px"></i></div>
<div class="pr" style="top:600px"><b class="nb">16</b><i class="x s ty">PLAY</i><i class="x s" style="left:666px;width:85px">CALL9.WAV</i></div>
<div class="pr" style="top:635px"><b class="nb">17</b><i class="x s ty">REPEAT</i></div>
<div class="pr" style="top:670px"><b class="nb">18</b><i class="x s ty">AT TIME</i><i class="x s t1">00</i><u class="k1">:</u><i class="x s t2">00</i><u class="k2">:</u><i class="x s t3">00</i></div>
<div class="pr" style="top:705px"><b class="nb">19</b><i class="x s ty">RECORD</i><i class="x s t1">23</i><u class="k1">:</u><i class="x s t2">59</i><u class="k2">:</u><i class="x s t3">59</i></div>
<div class="pr" style="top:740px"><b class="nb">20</b><i class="x s ty">FEATURE</i><i class="x s fe">01 - LED DISABLE</i><i class="x s fo">OFF</i></div>
<div class="pr" style="top:775px"><b class="nb">21</b><i class="x s ty">FEATURE</i><i class="x s fe">01 - LED DISABLE</i><i class="x s fo">&nbsp;ON</i></div>
<div class="pr" style="top:810px"><b class="nb">22</b><i class="x s ty">PAUSE</i><i class="x s t1">00</i><u class="k1">:</u><i class="x s t2">01</i><u class="k2">:</u><i class="x s t3">00</i></div>
<div class="pr" style="top:845px"><b class="nb">23</b><i class="x s ty">FEATURE</i><i class="x s fe">02 - 32BIT ENABLE</i><i class="x s fo">&nbsp;ON</i></div>
<div class="pr" style="top:880px"><b class="nb">24</b><i class="x s ty">UNTDATE</i><i class="x s" style="left:666px;width:51px">2023</i><i class="x s" style="left:728px;width:48px">Mar</i><i class="x s" style="left:787px;width:39px">16</i></div>
<div class="pr" style="top:915px"><b class="nb">25</b><i class="x s ty">&lt;Choose&gt;</i></div>

<div class="g" style="top:1457px;height:585px">
<div class="r" style="top:0"><span class="dl">10-Mar-2023 (0)</span><div class="h n2"><i>00:00</i><i>01:00</i><i>02:00</i><i>03:00</i><i>04:00</i><i>05:00</i><i>06:00</i><i>07:00</i><i>08:00</i><i>09:00</i><i>10:00</i><i>11:00</i><i>12:00</i><i>13:00</i><i>14:00</i><i>15:00</i><i>16:00</i><i>17:00</i><i>18:00</i><i>19:00</i><i>20:00</i><i>21:00</i><i>22:00</i><i>23:00</i><b class="bk" style="left:658px;width:494px"></b></div></div>
<div class="r" style="top:39px"><span class="dl">11-Mar-2023 (1)</span><div class="h n2"><i>00:00</i><i>01:00</i><i>02:00</i><i>03:00</i><i>04:00</i><i>05:00</i><i>06:00</i><i>07:00</i><i>08:00</i><i>09:00</i><i>10:00</i><i>11:00</i><i>12:00</i><i>13:00</i><i>14:00</i><i>15:00</i><i>16:00</i><i>17:00</i><i>18:00</i><i>19:00</i><i>20:00</i><i>21:00</i><i>22:00</i><i>23:00</i><b class="bk" style="left:0;width:1152px"></b></div></div>
<div class="r" style="top:78px"><span class="dl">12-Mar-2023 (2)</span><div class="h n2"><i>00:00</i><i>01:00</i><i>02:00</i><i>03:00</i><i>04:00</i><i>05:00</i><i>06:00</i><i>07:00</i><i>08:00</i><i>09:00</i><i>10:00</i><i>11:00</i><i>12:00</i><i>13:00</i><i>14:00</i><i>15:00</i><i>16:00</i><i>17:00</i><i>18:00</i><i>19:00</i><i>20:00</i><i>21:00</i><i>22:00</i><i>23:00</i><b class="bk" style="left:0;width:1152px"></b></div></div>
<div class="r" style="top:117px"><span class="dl">13-Mar-2023 (3)</span><div class="h n2"><i>00:00</i><i>01:00</i><i>02:00</i><i>03:00</i><i>04:00</i><i>05:00</i><i>06:00</i><i>07:00</i><i>08:00</i><i>09:00</i><i>10:00</i><i>11:00</i><i>12:00</i><i>13:00</i><i>14:00</i><i>15:00</i><i>16:00</i><i>17:00</i><i>18:00</i><i>19:00</i><i>20:00</i><i>21:00</i><i>22:00</i><i>23:00</i><b class="bk" style="left:0;width:1152px"></b></div></div>
<div class="r" style="top:156px"><span class="dl">14-Mar-2023 (4)</span><div class="h n2"><i>00:00</i><i>01:00</i><i>02:00</i><i>03:00</i><i>04:00</i><i>05:00</i><i>06:00</i><i>07:00</i><i>08:00</i><i>09:00</i><i>10:00</i><i>11:00</i><i>12:00</i><i>13:00</i><i>14:00</i><i>15:00</i><i>16:00</i><i>17:00</i><i>18:00</i><i>19:00</i><i>20:00</i><i>21:00</i><i>22:00</i><i>23:00</i><b class="bk" style="left:0;width:1152px"></b></div></div>
<div class="r" style="top:195px"><span class="dl">15-Mar-2023 (5)</span><div class="h n2"><i>00:00</i><i>01:00</i><i>02:00</i><i>03:00</i><i>04:00</i><i>05:00</i><i>06:00</i><i>07:00</i><i>08:00</i><i>09:00</i><i>10:00</i><i>11:00</i><i>12:00</i><i>13:00</i><i>14:00</i><i>15:00</i><i>16:00</i><i>17:00</i><i>18:00</i><i>19:00</i><i>20:00</i><i>21:00</i><i>22:00</i><i>23:00</i><b class="bk" style="left:0;width:1152px"></b></div></div>
<div class="r" style="top:234px"><span class="dl">16-Mar-2023 (6)</span><div class="h n2"><i>00:00</i><i>01:00</i><i>02:00</i><i>03:00</i><i>04:00</i><i>05:00</i><i>06:00</i><i>07:00</i><i>08:00</i><i>09:00</i><i>10:00</i><i>11:00</i><i>12:00</i><i>13:00</i><i>14:00</i><i>15:00</i><i>16:00</i><i>17:00</i><i>18:00</i><i>19:00</i><i>20:00</i><i>21:00</i><i>22:00</i><i>23:00</i><b class="bk" style="left:0;width:1152px"></b></div></div>
<div class="r" style="top:273px"><span class="dl">17-Mar-2023 (7)</span><div class="h n2"><i>00:00</i><i>01:00</i><i>02:00</i><i>03:00</i><i>04:00</i><i>05:00</i><i>06:00</i><i>07:00</i><i>08:00</i><i>09:00</i><i>10:00</i><i>11:00</i><i>12:00</i><i>13:00</i><i>14:00</i><i>15:00</i><i>16:00</i><i>17:00</i><i>18:00</i><i>19:00</i><i>20:00</i><i>21:00</i><i>22:00</i><i>23:00</i><b class="bk" style="left:0;width:1152px"></b></div></div>
<div class="r" style="top:312px"><span class="dl">18-Mar-2023 (8)</span><div class="h n2"><i>00:00</i><i>01:00</i><i>02:00</i><i>03:00</i><i>04:00</i><i>05:00</i><i>06:00</i><i>07:00</i><i>08:00</i><i>09:00</i><i>10:00</i><i>11:00</i><i>12:00</i><i>13:00</i><i>14:00</i><i>15:00</i><i>16:00</i><i>17:00</i><i>18:00</i><i>19:00</i><i>20:00</i><i>21:00</i><i>22:00</i><i>23:00</i><b class="bk" style="left:0;width:1152px"></b></div></div>
<div class="r" style="top:351px"><span class="dl">19-Mar-2023 (9)</span><div class="h n2"><i>00:00</i><i>01:00</i><i>02:00</i><i>03:00</i><i>04:00</i><i>05:00</i><i>06:00</i><i>07:00</i><i>08:00</i><i>09:00</i><i>10:00</i><i>11:00</i><i>12:00</i><i>13:00</i><i>14:00</i><i>15:00</i><i>16:00</i><i>17:00</i><i>18:00</i><i>19:00</i><i>20:00</i><i>21:00</i><i>22:00</i><i>23:00</i><b class="bk" style="left:0;width:1152px"></b></div></div>
<div class="r" style="top:390px"><span class="dl">20-Mar-2023 (10)</span><div class="h n2"><i>00:00</i><i>01:00</i><i>02:00</i><i>03:00</i><i>04:00</i><i>05:00</i><i>06:00</i><i>07:00</i><i>08:00</i><i>09:00</i><i>10:00</i><i>11:00</i><i>12:00</i><i>13:00</i><i>14:00</i><i>15:00</i><i>16:00</i><i>17:00</i><i>18:00</i><i>19:00</i><i>20:00</i><i>21:00</i><i>22:00</i><i>23:00</i><b class="bk" style="left:0;width:1152px"></b></div></div>
<div class="r" style="top:429px"><span class="dl">21-Mar-2023 (11)</span><div class="h n2"><i>00:00</i><i>01:00</i><i>02:00</i><i>03:00</i><i>04:00</i><i>05:00</i><i>06:00</i><i>07:00</i><i>08:00</i><i>09:00</i><i>10:00</i><i>11:00</i><i>12:00</i><i>13:00</i><i>14:00</i><i>15:00</i><i>16:00</i><i>17:00</i><i>18:00</i><i>19:00</i><i>20:00</i><i>21:00</i><i>22:00</i><i>23:00</i><b class="bk" style="left:0;width:1152px"></b></div></div>
<div class="r" style="top:468px"><span class="dl">22-Mar-2023 (12)</span><div class="h n2"><i>00:00</i><i>01:00</i><i>02:00</i><i>03:00</i><i>04:00</i><i>05:00</i><i>06:00</i><i>07:00</i><i>08:00</i><i>09:00</i><i>10:00</i><i>11:00</i><i>12:00</i><i>13:00</i><i>14:00</i><i>15:00</i><i>16:00</i><i>17:00</i><i>18:00</i><i>19:00</i><i>20:00</i><i>21:00</i><i>22:00</i><i>23:00</i><b class="bk" style="left:0;width:1152px"></b></div></div>
<div class="r" style="top:507px"><span class="dl">23-Mar-2023 (13)</span><div class="h n2"><i>00:00</i><i>01:00</i><i>02:00</i><i>03:00</i><i>04:00</i><i>05:00</i><i>06:00</i><i>07:00</i><i>08:00</i><i>09:00</i><i>10:00</i><i>11:00</i><i>12:00</i><i>13:00</i><i>14:00</i><i>15:00</i><i>16:00</i><i>17:00</i><i>18:00</i><i>19:00</i><i>20:00</i><i>21:00</i><i>22:00</i><i>23:00</i><b class="bk" style="left:0;width:1152px"></b></div></div>
<div class="r" style="top:546px"><span class="dl">24-Mar-2023 (14)</span><div class="h n2"><i>00:00</i><i>01:00</i><i>02:00</i><i>03:00</i><i>04:00</i><i>05:00</i><i>06:00</i><i>07:00</i><i>08:00</i><i>09:00</i><i>10:00</i><i>11:00</i><i>12:00</i><i>13:00</i><i>14:00</i><i>15:00</i><i>16:00</i><i>17:00</i><i>18:00</i><i>19:00</i><i>20:00</i><i>21:00</i><i>22:00</i><i>23:00</i><b class="bk" style="left:0;width:1152px"></b></div></div>
</div>
<div class="lg" style="left:176px;background:#c0c0ff"></div><div class="lt" style="left:203px">Night</div>
<div class="lg" style="left:364px;background:#ffff80"></div><div class="lt" style="left:391px">Day</div>
<div class="lg" style="left:553px;background:#000"></div><div class="lt" style="left:580px">Recording</div>
<div class="lg" style="left:744px;background:#800080"></div><div class="lt" style="left:771px">Flash full</div>
<div class="lg" style="left:935px;background:#f00"></div><div class="lt" style="left:962px">Battery empty</div>
</div>
<div class="dv" style="left:2558px"></div>

<!-- ================= WINDOW 3 ================= -->
<div class="w" style="left:2560px;width:1277px">
<div class="tb"><div class="ic"></div><div class="tt">SM3 Configurator</div><span class="cl" style="left:1160px">–</span><span class="cl" style="left:1206px">☐</span><span class="cl" style="left:1252px">✕</span></div>
<div class="mn"><span style="left:8px">File</span><span style="left:40px">Help</span></div>
<div class="gb" style="left:2px;top:57px;width:471px;height:200px"></div><div class="gt" style="left:8px;top:50px">Configuration settings</div>
<div class="gs" style="left:0;top:257px;width:473px;height:5px"></div>
<div class="gb" style="left:2px;top:265px;width:471px;height:144px"></div><div class="gt" style="left:8px;top:258px">Deployment scenario</div>
<div class="gb" style="left:473px;top:57px;width:810px;height:1288px"></div><div class="gt" style="left:480px;top:50px">Program</div>
<div class="gs" style="left:473px;top:1345px;width:805px;height:8px"></div>
<div class="gb" style="left:472px;top:1353px;width:810px;height:100px"></div>
<div class="gs" style="left:0;top:1453px;width:1278px;height:6px"></div>
<div class="er" style="left:482px;top:1360px">Error: Nap without ultra hw at line 15</div>
<div class="er" style="left:482px;top:1373px">Error: FREQMAX &lt;= FREQMIN   at line 19</div>
<div class="er" style="left:482px;top:1386px">Error: DURMAX &lt;= DURMIN    at line 19</div>
<div class="er" style="left:482px;top:1399px">Error: HPF 16K, no ult hw   at line 19</div>
<div class="er" style="left:482px;top:1412px">Error: ZC, no ult hw      at line 19</div>

<div class="cr" style="top:73px"><u class="rl">Prefix:</u><span class="cb on"></span><i class="x" style="left:147px;width:109px">SONGMETER3B</i></div>
<div class="cr" style="top:104px"><u class="rl">Timezone:</u><span class="cb on"></span><i class="x s" style="left:147px;width:69px">UTC+12</i><i class="x s" style="left:300px;width:41px">:45</i></div>
<div class="cr" style="top:135px"><u class="rl">Position:</u><span class="cb on"></span><u style="left:119px">Lat:</u><i class="x" style="left:147px;width:109px">23.32 S</i><u style="left:267px">Lon:</u><i class="x" style="left:300px;width:108px">16.54 E</i></div>
<div class="cr" style="top:166px"><u class="rl">Solar mode:</u><span class="cb"></span><i class="x s d" style="left:147px;width:104px">Astronomical</i></div>
<div class="cr" style="top:197px"><u class="rl">Cutoff voltage:</u><span class="cb"></span><i class="x d" style="left:147px;width:109px">9.9 V</i></div>
<div class="cr" style="top:228px"><u class="rl">Sensitivity:</u><span class="cb"></span><u style="left:128px">0:</u><i class="x d" style="left:147px;width:109px">-10.0 dB</i><u style="left:281px">1:</u><i class="x d" style="left:300px;width:108px">-299.9 dB</i></div>

<div class="cr" style="top:283px"><i class="x s" style="left:11px;width:67px">SM3</i><u style="left:138px;top:-6px">Start dd/mm/yy</u><u style="left:156px;top:8px">hh:mm:ss</u><i class="x" style="left:227px;width:108px">10/03/2023</i><i class="x" style="left:347px;width:107px">13:43:05</i></div>
<div class="cr" style="top:318px"><i class="x s" style="left:11px;width:78px">A: Empty</i><i class="x s" style="left:101px;width:77px">B: Empty</i><i class="x s" style="left:227px;width:78px">C: Empty</i><i class="x s" style="left:347px;width:79px">D: Empty</i></div>
<div class="cr" style="top:349px"><u style="left:40px;width:50px;text-align:right">Mic 0:</u><i class="x s" style="left:101px;width:114px">Internal</i><u style="left:286px;width:50px;text-align:right">Mic 1:</u><i class="x s" style="left:347px;width:114px">Internal</i></div>
<div class="cr" style="top:379px"><u style="left:0;width:90px;text-align:right">Trig Ratio (%):</u><i class="x" style="left:101px;width:108px">10%</i><u style="left:236px;width:100px;text-align:right">Battery (Wh):</u><i class="x" style="left:347px;width:107px">72 Wh</i></div>

<div class="pr" style="top:75px"><b class="nb">1</b><i class="x s ty">HPF</i><u class="a">CH 0:</u><i class="x s c0">220 Hz</i><u class="la1">CH 1:</u><i class="x s c1">1 kHz</i></div>
<div class="pr" style="top:110px"><b class="nb">2</b><i class="x s ty">HPF</i><u class="a">CH 0:</u><i class="x s c0">&nbsp;Off</i><u class="la1">CH 1:</u><i class="x s c1">16 kHz</i></div>
<div class="pr" style="top:145px"><b class="nb">3</b><i class="x s ty">GAIN</i><u class="a">CH 0:</u><i class="x s c0w">Automatic</i><i class="x d f0w"></i><u class="lc1">CH 1:</u><i class="x s c1w">Automatic</i><i class="x d f1w"></i></div>
<div class="pr" style="top:180px"><b class="nb">4</b><i class="x s ty">GAIN</i><u class="a">CH 0:</u><i class="x s c0w">Specify</i><i class="x f0w">0.0 dB</i><u class="lc1">CH 1:</u><i class="x s c1w">Specify</i><i class="x f1w">30.5 dB</i></div>
<div class="pr" style="top:215px"><b class="nb">5</b><i class="x s ty">FS</i><i class="x s" style="left:666px;width:91px">WAV Format</i><i class="x s" style="left:768px;width:65px">CH 0+1</i><i class="x s" style="left:844px;width:78px">24000 Hz</i></div>
<div class="pr" style="top:250px"><b class="nb">6</b><i class="x s ty">FS</i><i class="x s" style="left:666px;width:91px">WAC Format</i><i class="x s" style="left:768px;width:65px">CH 1</i><i class="x s" style="left:844px;width:78px">Auto Rate</i></div>
<div class="pr" style="top:285px"><b class="nb">7</b><i class="x s ty">ZC</i><i class="x s" style="left:666px;width:65px">AUTO</i><i class="x s" style="left:743px;width:59px">DIV 4</i></div>
<div class="pr" style="top:320px"><b class="nb">8</b><i class="x s ty">FRQMIN</i><u class="a">CH 0:</u><i class="x s c0">Specify</i><i class="x f0">192 kHz</i><u class="lb1">CH 1:</u><i class="x s c1b">Specify</i><i class="x f1b">16 kHz</i></div>
<div class="pr" style="top:355px"><b class="nb">9</b><i class="x s ty">FRQMAX</i><u class="a">CH 0:</u><i class="x s c0">Specify</i><i class="x f0">192 kHz</i><u class="lb1">CH 1:</u><i class="x s c1b">Off</i><i class="x d f1b"></i></div>
<div class="pr" style="top:390px"><b class="nb">10</b><i class="x s ty">DMIN</i><u class="a">CH 0:</u><i class="x s c0">Specify</i><i class="x f0">800.0 ms</i><u class="lb1">CH 1:</u><i class="x s c1b">Specify</i><i class="x f1b">555.5 ms</i></div>
<div class="pr" style="top:425px"><b class="nb">11</b><i class="x s ty">DMAX</i><u class="a">CH 0:</u><i class="x s c0">Specify</i><i class="x f0">70.0 ms</i><u class="lb1">CH 1:</u><i class="x s c1b">Off</i><i class="x d f1b"></i></div>
<div class="pr" style="top:460px"><b class="nb">12</b><i class="x s ty">TRGLVL</i><u class="a">CH 0:</u><i class="x s c0w">Specify</i><i class="x f0w">-23 dB</i><u class="lc1">CH 1:</u><i class="x s c1w">Specify</i><i class="x f1w">12 dB</i></div>
<div class="pr" style="top:495px"><b class="nb">13</b><i class="x s ty">TRGWIN</i><u class="a">CH 0:</u><i class="x" style="left:703px;width:109px">9.9 s</i><u style="left:824px">CH 1:</u><i class="x" style="left:856px;width:108px">1.3 s</i></div>
<div class="pr" style="top:530px"><b class="nb">14</b><i class="x s ty">TRGMAX</i><u class="a">CH 0:</u><i class="x s c0">Specify</i><i class="x f0">99.7 s</i><u class="lb1">CH 1:</u><i class="x s c1b">Specify</i><i class="x f1b">99.9 s</i></div>
<div class="pr" style="top:565px"><b class="nb">15</b><i class="x s ty">NAP</i><i class="x s" style="left:666px;width:63px">Specify</i><i class="x" style="left:741px;width:108px">99 min</i></div>
<div class="pr" style="top:600px"><b class="nb">16</b><i class="x s ty">PLAY</i><i class="x s" style="left:666px;width:85px">CALL8.WAV</i></div>
<div class="pr" style="top:635px"><b class="nb">17</b><i class="x s ty">REPEAT</i></div>
<div class="pr" style="top:670px"><b class="nb">18</b><i class="x s ty">AT TIME</i><i class="x s t1">23</i><u class="k1">:</u><i class="x s t2">29</i><u class="k2">:</u><i class="x s t3">29</i></div>
<div class="pr" style="top:705px"><b class="nb">19</b><i class="x s ty">RECORD</i><i class="x s t1">23</i><u class="k1">:</u><i class="x s t2">59</i><u class="k2">:</u><i class="x s t3">59</i></div>
<div class="pr" style="top:740px"><b class="nb">20</b><i class="x s ty">FEATURE</i><i class="x s fe">01 - LED DISABLE</i><i class="x s fo">OFF</i></div>
<div class="pr" style="top:775px"><b class="nb">21</b><i class="x s ty">FEATURE</i><i class="x s fe">01 - LED DISABLE</i><i class="x s fo">&nbsp;ON</i></div>
<div class="pr" style="top:810px"><b class="nb">22</b><i class="x s ty">PAUSE</i><i class="x s t1">00</i><u class="k1">:</u><i class="x s t2">01</i><u class="k2">:</u><i class="x s t3">00</i></div>
<div class="pr" style="top:845px"><b class="nb">23</b><i class="x s ty">FEATURE</i><i class="x s fe">02 - 32BIT ENABLE</i><i class="x s fo">&nbsp;ON</i></div>
<div class="pr" style="top:880px"><b class="nb">24</b><i class="x s ty">UNTDATE</i><i class="x s" style="left:666px;width:51px">2023</i><i class="x s" style="left:728px;width:48px">Mar</i><i class="x s" style="left:787px;width:39px">16</i></div>
<div class="pr" style="top:915px"><b class="nb">25</b><i class="x s ty">FEATURE</i><i class="x s fe">01 - LED DISABLE</i><i class="x s fo">OFF</i></div>
<div class="pr" style="top:950px"><b class="nb">26</b><i class="x s ty">TRGLVL</i><u class="a">CH 0:</u><i class="x s c0w">Specify</i><i class="x f0w">1 dB</i><u class="lc1">CH 1:</u><i class="x s c1w">Specify</i><i class="x f1w">-1 dB</i></div>
<div class="pr" style="top:985px"><b class="nb">27</b><i class="x s ty">&lt;Choose&gt;</i></div>

<div class="g" style="top:1459px;height:583px">
<div class="r" style="top:0"><span class="dl">10-Mar-2023 (0)</span><div class="h n3"><i>00:00</i><i>01:00</i><i>02:00</i><i>03:00</i><i>04:00</i><i>05:00</i><i>06:00</i><i>07:00</i><i>08:00</i><i>09:00</i><i>10:00</i><i>11:00</i><i>12:00</i><i>13:00</i><i>14:00</i><i>15:00</i><i>16:00</i><i>17:00</i><i>18:00</i><i>19:00</i><i>20:00</i><i>21:00</i><i>22:00</i><i>23:00</i><b class="fl" style="left:1127px;width:25px"></b></div></div>
<div class="r" style="top:39px"><span class="dl">11-Mar-2023 (1)</span><div class="h n3"><i>00:00</i><i>01:00</i><i>02:00</i><i>03:00</i><i>04:00</i><i>05:00</i><i>06:00</i><i>07:00</i><i>08:00</i><i>09:00</i><i>10:00</i><i>11:00</i><i>12:00</i><i>13:00</i><i>14:00</i><i>15:00</i><i>16:00</i><i>17:00</i><i>18:00</i><i>19:00</i><i>20:00</i><i>21:00</i><i>22:00</i><i>23:00</i><b class="fl" style="left:0;width:1127px"></b></div></div>
<div class="r" style="top:78px"><span class="dl">12-Mar-2023 (2)</span><div class="h n3"><i>00:00</i><i>01:00</i><i>02:00</i><i>03:00</i><i>04:00</i><i>05:00</i><i>06:00</i><i>07:00</i><i>08:00</i><i>09:00</i><i>10:00</i><i>11:00</i><i>12:00</i><i>13:00</i><i>14:00</i><i>15:00</i><i>16:00</i><i>17:00</i><i>18:00</i><i>19:00</i><i>20:00</i><i>21:00</i><i>22:00</i><i>23:00</i><b class="fl" style="left:1127px;width:25px"></b></div></div>
<div class="r" style="top:117px"><span class="dl">13-Mar-2023 (3)</span><div class="h n3"><i>00:00</i><i>01:00</i><i>02:00</i><i>03:00</i><i>04:00</i><i>05:00</i><i>06:00</i><i>07:00</i><i>08:00</i><i>09:00</i><i>10:00</i><i>11:00</i><i>12:00</i><i>13:00</i><i>14:00</i><i>15:00</i><i>16:00</i><i>17:00</i><i>18:00</i><i>19:00</i><i>20:00</i><i>21:00</i><i>22:00</i><i>23:00</i><b class="fl" style="left:0;width:1127px"></b></div></div>
<div class="r" style="top:156px"><span class="dl">14-Mar-2023 (4)</span><div class="h n3"><i>00:00</i><i>01:00</i><i>02:00</i><i>03:00</i><i>04:00</i><i>05:00</i><i>06:00</i><i>07:00</i><i>08:00</i><i>09:00</i><i>10:00</i><i>11:00</i><i>12:00</i><i>13:00</i><i>14:00</i><i>15:00</i><i>16:00</i><i>17:00</i><i>18:00</i><i>19:00</i><i>20:00</i><i>21:00</i><i>22:00</i><i>23:00</i><b class="fl" style="left:1127px;width:25px"></b></div></div>
<div class="r" style="top:195px"><span class="dl">15-Mar-2023 (5)</span><div class="h n3"><i>00:00</i><i>01:00</i><i>02:00</i><i>03:00</i><i>04:00</i><i>05:00</i><i>06:00</i><i>07:00</i><i>08:00</i><i>09:00</i><i>10:00</i><i>11:00</i><i>12:00</i><i>13:00</i><i>14:00</i><i>15:00</i><i>16:00</i><i>17:00</i><i>18:00</i><i>19:00</i><i>20:00</i><i>21:00</i><i>22:00</i><i>23:00</i><b class="fl" style="left:0;width:1127px"></b></div></div>
<div class="r" style="top:234px"><span class="dl">16-Mar-2023 (6)</span><div class="h n3"><i>00:00</i><i>01:00</i><i>02:00</i><i>03:00</i><i>04:00</i><i>05:00</i><i>06:00</i><i>07:00</i><i>08:00</i><i>09:00</i><i>10:00</i><i>11:00</i><i>12:00</i><i>13:00</i><i>14:00</i><i>15:00</i><i>16:00</i><i>17:00</i><i>18:00</i><i>19:00</i><i>20:00</i><i>21:00</i><i>22:00</i><i>23:00</i></div></div>
<div class="r" style="top:273px"><span class="dl">17-Mar-2023 (7)</span><div class="h n3"><i>00:00</i><i>01:00</i><i>02:00</i><i>03:00</i><i>04:00</i><i>05:00</i><i>06:00</i><i>07:00</i><i>08:00</i><i>09:00</i><i>10:00</i><i>11:00</i><i>12:00</i><i>13:00</i><i>14:00</i><i>15:00</i><i>16:00</i><i>17:00</i><i>18:00</i><i>19:00</i><i>20:00</i><i>21:00</i><i>22:00</i><i>23:00</i></div></div>
<div class="r" style="top:312px"><span class="dl">18-Mar-2023 (8)</span><div class="h n3"><i>00:00</i><i>01:00</i><i>02:00</i><i>03:00</i><i>04:00</i><i>05:00</i><i>06:00</i><i>07:00</i><i>08:00</i><i>09:00</i><i>10:00</i><i>11:00</i><i>12:00</i><i>13:00</i><i>14:00</i><i>15:00</i><i>16:00</i><i>17:00</i><i>18:00</i><i>19:00</i><i>20:00</i><i>21:00</i><i>22:00</i><i>23:00</i></div></div>
<div class="r" style="top:351px"><span class="dl">19-Mar-2023 (9)</span><div class="h n3"><i>00:00</i><i>01:00</i><i>02:00</i><i>03:00</i><i>04:00</i><i>05:00</i><i>06:00</i><i>07:00</i><i>08:00</i><i>09:00</i><i>10:00</i><i>11:00</i><i>12:00</i><i>13:00</i><i>14:00</i><i>15:00</i><i>16:00</i><i>17:00</i><i>18:00</i><i>19:00</i><i>20:00</i><i>21:00</i><i>22:00</i><i>23:00</i></div></div>
<div class="r" style="top:390px"><span class="dl">20-Mar-2023 (10)</span><div class="h n3"><i>00:00</i><i>01:00</i><i>02:00</i><i>03:00</i><i>04:00</i><i>05:00</i><i>06:00</i><i>07:00</i><i>08:00</i><i>09:00</i><i>10:00</i><i>11:00</i><i>12:00</i><i>13:00</i><i>14:00</i><i>15:00</i><i>16:00</i><i>17:00</i><i>18:00</i><i>19:00</i><i>20:00</i><i>21:00</i><i>22:00</i><i>23:00</i></div></div>
<div class="r" style="top:429px"><span class="dl">21-Mar-2023 (11)</span><div class="h n3"><i>00:00</i><i>01:00</i><i>02:00</i><i>03:00</i><i>04:00</i><i>05:00</i><i>06:00</i><i>07:00</i><i>08:00</i><i>09:00</i><i>10:00</i><i>11:00</i><i>12:00</i><i>13:00</i><i>14:00</i><i>15:00</i><i>16:00</i><i>17:00</i><i>18:00</i><i>19:00</i><i>20:00</i><i>21:00</i><i>22:00</i><i>23:00</i></div></div>
<div class="r" style="top:468px"><span class="dl">22-Mar-2023 (12)</span><div class="h n3"><i>00:00</i><i>01:00</i><i>02:00</i><i>03:00</i><i>04:00</i><i>05:00</i><i>06:00</i><i>07:00</i><i>08:00</i><i>09:00</i><i>10:00</i><i>11:00</i><i>12:00</i><i>13:00</i><i>14:00</i><i>15:00</i><i>16:00</i><i>17:00</i><i>18:00</i><i>19:00</i><i>20:00</i><i>21:00</i><i>22:00</i><i>23:00</i></div></div>
<div class="r" style="top:507px"><span class="dl">23-Mar-2023 (13)</span><div class="h n3"><i>00:00</i><i>01:00</i><i>02:00</i><i>03:00</i><i>04:00</i><i>05:00</i><i>06:00</i><i>07:00</i><i>08:00</i><i>09:00</i><i>10:00</i><i>11:00</i><i>12:00</i><i>13:00</i><i>14:00</i><i>15:00</i><i>16:00</i><i>17:00</i><i>18:00</i><i>19:00</i><i>20:00</i><i>21:00</i><i>22:00</i><i>23:00</i></div></div>
<div class="r" style="top:546px"><span class="dl">24-Mar-2023 (14)</span><div class="h n3"><i>00:00</i><i>01:00</i><i>02:00</i><i>03:00</i><i>04:00</i><i>05:00</i><i>06:00</i><i>07:00</i><i>08:00</i><i>09:00</i><i>10:00</i><i>11:00</i><i>12:00</i><i>13:00</i><i>14:00</i><i>15:00</i><i>16:00</i><i>17:00</i><i>18:00</i><i>19:00</i><i>20:00</i><i>21:00</i><i>22:00</i><i>23:00</i></div></div>
<div style="position:absolute;left:1266px;top:20px;width:3px;height:22px;background:#8a8a8a;border-radius:2px"></div>
</div>
<div class="lg" style="left:176px;background:#c0c0ff"></div><div class="lt" style="left:203px">Night</div>
<div class="lg" style="left:364px;background:#ffff80"></div><div class="lt" style="left:391px">Day</div>
<div class="lg" style="left:553px;background:#000"></div><div class="lt" style="left:580px">Recording</div>
<div class="lg" style="left:744px;background:#800080"></div><div class="lt" style="left:771px">Flash full</div>
<div class="lg" style="left:935px;background:#f00"></div><div class="lt" style="left:962px">Battery empty</div>
</div>
</body></html>
